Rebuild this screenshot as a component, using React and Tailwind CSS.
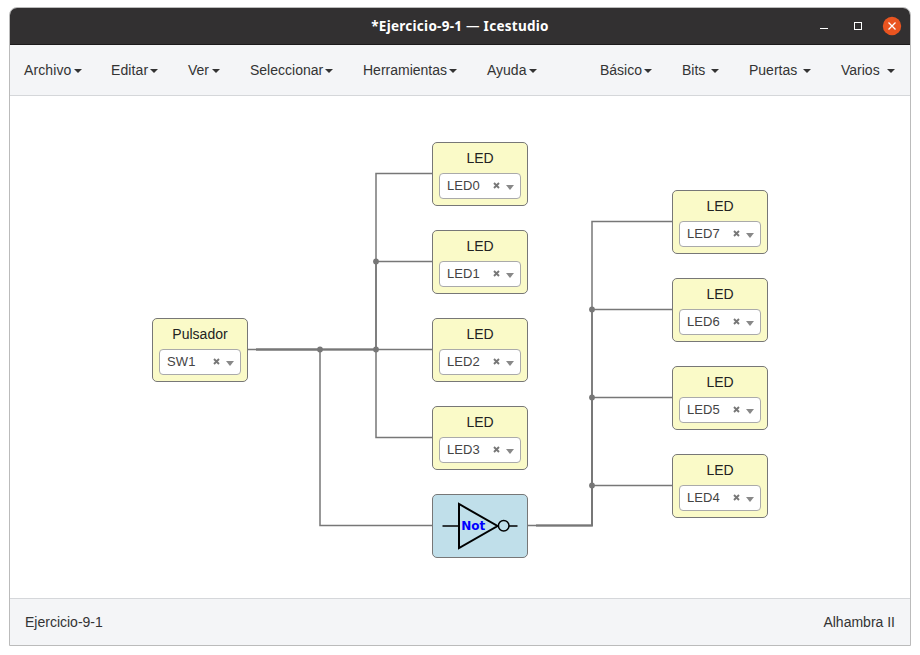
import React from "react";

const leftMenus = [
  { label: "Archivo", cls: "w-[58px] ml-[14px] tracking-[0.1px]" },
  { label: "Editar", cls: "w-[47px] ml-[29px] tracking-[0.1px]" },
  { label: "Ver", cls: "w-[32px] ml-[30px] tracking-[0px]" },
  { label: "Seleccionar", cls: "w-[83px] ml-[30px] tracking-[0px]" },
  { label: "Herramientas", cls: "w-[94px] ml-[30px] tracking-[0px]" },
  { label: "Ayuda", cls: "w-[50px] ml-[30px] tracking-[0px]" },
];

const rightMenus = [
  { label: "Básico", cls: "w-[52px]" },
  { label: "Bits", cls: "w-[37px] ml-[30px]" },
  { label: "Puertas", cls: "w-[62px] ml-[30px]" },
  { label: "Varios", cls: "w-[54px] ml-[30px]" },
];

const blocks = [
  { title: "Pulsador", pin: "SW1", pos: "left-[152px] top-[318px]" },
  { title: "LED", pin: "LED0", pos: "left-[432px] top-[142px]" },
  { title: "LED", pin: "LED1", pos: "left-[432px] top-[230px]" },
  { title: "LED", pin: "LED2", pos: "left-[432px] top-[318px]" },
  { title: "LED", pin: "LED3", pos: "left-[432px] top-[406px]" },
  { title: "LED", pin: "LED7", pos: "left-[672px] top-[190px]" },
  { title: "LED", pin: "LED6", pos: "left-[672px] top-[278px]" },
  { title: "LED", pin: "LED5", pos: "left-[672px] top-[366px]" },
  { title: "LED", pin: "LED4", pos: "left-[672px] top-[454px]" },
];

const wires = [
  "M248 349.6H376V173.6H432",
  "M256 349.6H376V261.6H432",
  "M256 349.6H432",
  "M256 349.6H376V437.6H432",
  "M256 349.6H320V525.6H432",
  "M528 525.6H592V221.6H672",
  "M536 525.6H592V309.6H672",
  "M536 525.6H592V397.6H672",
  "M536 525.6H592V485.6H672",
];

const joints = [
  [320, 349.5],
  [376, 349.5],
  [376, 261.5],
  [592, 309.5],
  [592, 397.5],
  [592, 485.5],
];

function Menu({ label, cls }) {
  return (
    <div className={"flex shrink-0 items-center justify-between whitespace-nowrap " + cls}>
      <span>{label}</span>
      <span className="mt-[2px] h-0 w-0 shrink-0 border-x-4 border-t-4 border-x-transparent border-t-[#333]" />
    </div>
  );
}

function Block({ title, pin, pos }) {
  return (
    <div
      className={
        "absolute flex h-16 w-24 flex-col items-center rounded-[5px] border border-[#777] bg-[#fafac8] " + pos
      }
    >
      <div className="mt-[5px] h-5 text-sm leading-5 text-[#222]">{title}</div>
      <div className="mt-[5px] flex h-[26px] w-[82px] items-center rounded-[4px] border border-[#aaa] bg-white pl-[7px] pr-[6px] text-[13px] text-[#444]">
        <span className="flex-1 tracking-[0.1px]">{pin}</span>
        <svg className="mb-px mr-[6px] h-[7px] w-[7px]" viewBox="0 0 7 7">
          <path d="M1 1L6 6M6 1L1 6" stroke="#777" strokeWidth="1.9" />
        </svg>
        <svg className="mt-[3px] h-[5px] w-2" viewBox="0 0 8 5">
          <path d="M0 0H8L4 5Z" fill="#888" />
        </svg>
      </div>
    </div>
  );
}

export default function App() {
  return (
    <div className="h-[655px] w-[920px] overflow-hidden bg-white pl-[9px] pt-[7px] font-['Liberation_Sans',Arial,sans-serif] text-sm text-[#333]">
      <div className="flex h-[639px] w-[902px] flex-col overflow-hidden rounded-t-[8px] border border-[#bbb] bg-white">
        <header className="flex h-[37px] shrink-0 items-center border-b border-[#1c1a1b] bg-[#323031] text-white">
          <div className="w-[100px]" />
          <h1 className="flex-1 text-center font-['Noto_Sans',sans-serif] text-[13.5px] font-bold leading-5 tracking-[0.27px]">
            *Ejercicio-9-1 <span className="font-normal">—</span> Icestudio
          </h1>
          <svg className="h-9 w-[100px]" viewBox="0 0 100 36" fill="none">
            <path d="M10 20.5H18" stroke="#fff" />
            <rect x="44.5" y="14.5" width="7" height="7" stroke="#fff" />
            <circle cx="82" cy="18" r="9.2" fill="#e95420" />
            <path d="M78.5 14.5L85.5 21.5M85.5 14.5L78.5 21.5" stroke="#fff" strokeWidth="1.3" />
          </svg>
        </header>

        <nav className="flex h-[51px] shrink-0 items-center justify-between border-b border-[#d5d7da] bg-[#f4f5f7]">
          <div className="flex">
            {leftMenus.map((m) => (
              <Menu key={m.label} {...m} />
            ))}
          </div>
          <div className="mr-[15px] flex">
            {rightMenus.map((m) => (
              <Menu key={m.label} {...m} />
            ))}
          </div>
        </nav>

        <main className="relative flex-1">
          <div className="absolute -left-[10px] -top-[96px] h-[655px] w-[920px]">
            <svg className="absolute inset-0 h-full w-full" viewBox="0 0 920 655" fill="none">
              {wires.map((d) => (
                <path key={d} d={d} stroke="#777" strokeWidth="1.5" />
              ))}
              {joints.map(([x, y]) => (
                <circle key={x + "-" + y} cx={x} cy={y} r="2.9" fill="#777" />
              ))}
            </svg>
            {blocks.map((b) => (
              <Block key={b.pin} {...b} />
            ))}
            <div className="absolute left-[432px] top-[494px] h-16 w-24 rounded-[5px] border border-[#777] bg-[#c0dfea]">
              <svg className="h-full w-full" viewBox="433 495 94 62" fill="none" stroke="#000">
                <path d="M442.5 526H458M509 526H517.5" strokeWidth="1.5" />
                <path d="M459 504V548L497.5 526Z" strokeWidth="2" />
                <circle cx="503.7" cy="525.8" r="5.3" strokeWidth="1.5" />
                <text
                  x="461.3"
                  y="530"
                  fill="#00f"
                  stroke="none"
                  className="font-['DejaVu_Sans',sans-serif] text-[12px] font-bold"
                >
                  Not
                </text>
              </svg>
            </div>
          </div>
        </main>

        <footer className="flex h-[47px] shrink-0 items-center justify-between border-t border-[#d5d7da] bg-[#f4f5f7] px-[15px]">
          <span>Ejercicio-9-1</span>
          <span>Alhambra II</span>
        </footer>
      </div>
    </div>
  );
}
